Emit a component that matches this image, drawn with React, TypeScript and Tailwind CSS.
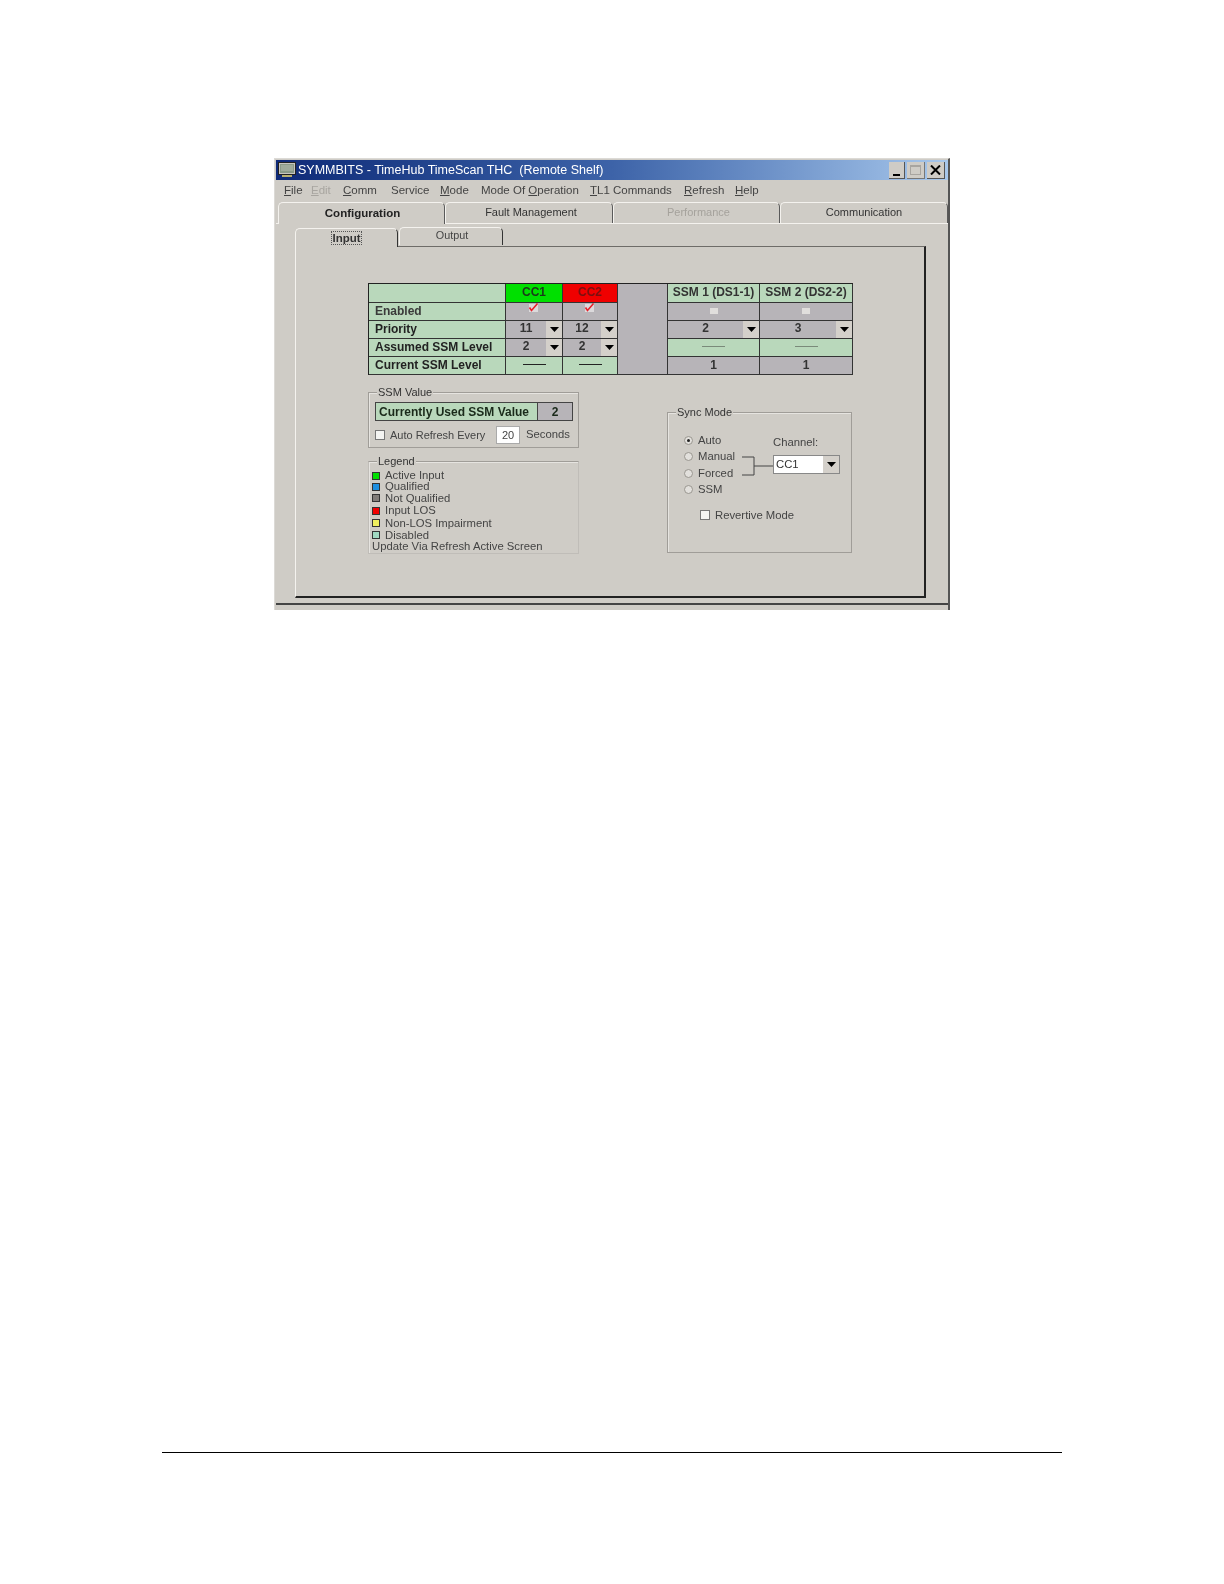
import React from "react";

const menus = [
  { pre: "", key: "F", rest: "ile", w: "w-[27px]", off: false },
  { pre: "", key: "E", rest: "dit", w: "w-[32px]", off: true },
  { pre: "", key: "C", rest: "omm", w: "w-[48px]", off: false },
  { pre: "Service", key: "", rest: "", w: "w-[49px]", off: false },
  { pre: "", key: "M", rest: "ode", w: "w-[41px]", off: false },
  { pre: "Mode Of ", key: "O", rest: "peration", w: "w-[109px]", off: false },
  { pre: "", key: "T", rest: "L1 Commands", w: "w-[94px]", off: false },
  { pre: "", key: "R", rest: "efresh", w: "w-[51px]", off: false },
  { pre: "", key: "H", rest: "elp", w: "w-[40px]", off: false },
];

const legend = [
  { color: "bg-[#00e000]", label: "Active Input", h: "h-[11px]" },
  { color: "bg-[#1e8fe0]", label: "Qualified", h: "h-[11px]" },
  { color: "bg-[#807c78]", label: "Not Qualified", h: "h-[12px]" },
  { color: "bg-[#f00000]", label: "Input LOS", h: "h-[13px]" },
  { color: "bg-[#f0f060]", label: "Non-LOS Impairment", h: "h-[12px]" },
  { color: "bg-[#a0d8c0]", label: "Disabled", h: "h-[12px]" },
];

function Arrow() {
  return (
    <svg width="9" height="5" viewBox="0 0 9 5" className="text-black">
      <polygon points="0,0 9,0 4.5,5" fill="currentColor" />
    </svg>
  );
}

function OuterTab({ label, active, off, w, shift = "" }: { label: string; active?: boolean; off?: boolean; w: string; shift?: string }) {
  return (
    <div
      className={`${w} ${shift} flex items-center justify-center rounded-t-[5px] border-t border-l border-r border-t-[#f4f2ee] border-l-[#f4f2ee] border-r-[#5a5a5a] bg-[#cfccc6] ${
        active ? "relative z-10 -mb-px h-[22px] text-[11.5px] font-bold text-[#222]" : "h-[21px] pb-[2px] text-[11px]"
      } ${off ? "text-[#a5a29c]" : ""}`}
    >
      {label}
    </div>
  );
}

function Head({ children, dark }: { children: React.ReactNode; dark?: boolean }) {
  return (
    <div
      className={`flex items-center border-r border-b border-[#333] bg-[#b9d8bb] pb-[2px] pl-[6px] font-bold ${
        dark ? "text-[#222]" : "text-[#3a3a3a]"
      }`}
    >
      {children}
    </div>
  );
}

function Check() {
  return (
    <div className="flex items-start justify-center border-r border-b border-[#333] bg-[#b7b4b8]">
      <svg width="12" height="10" viewBox="0 0 12 10">
        <rect x="1" y="1" width="9" height="8" fill="#dcdadc" />
        <path d="M1.5 4.5 L3.5 7.5 L9.5 0.5" fill="none" stroke="#e8202a" strokeWidth="1.6" />
      </svg>
    </div>
  );
}

function Box() {
  return (
    <div className="flex items-center justify-center border-r border-b border-[#333] bg-[#b7b4b8]">
      <div className="-mt-[2px] h-[6px] w-[8px] bg-[#e0dedc]" />
    </div>
  );
}

function Drop({ value }: { value: string }) {
  return (
    <div className="flex items-stretch border-r border-b border-[#333] bg-[#b7b4b8]">
      <div className="flex flex-1 items-center justify-center pb-[3px] font-bold text-[#333]">{value}</div>
      <div className="flex w-[16px] items-center justify-center bg-[#d4d0ca]">
        <Arrow />
      </div>
    </div>
  );
}

function Cell({ children, green }: { children?: React.ReactNode; green?: boolean }) {
  return (
    <div
      className={`flex items-center justify-center border-r border-b border-[#333] pb-[2px] font-bold text-[#333] ${
        green ? "bg-[#b9d8bb]" : "bg-[#b7b4b8]"
      }`}
    >
      {children}
    </div>
  );
}

function Dash({ light }: { light?: boolean }) {
  return <div className={`h-px w-[23px] ${light ? "bg-[#7a8a7a]" : "bg-[#222]"}`} />;
}

function Group({ title, titleX, className, children }: { title: string; titleX: string; className: string; children: React.ReactNode }) {
  return (
    <div className={`relative border border-[#a09d98] shadow-[inset_1px_1px_0_#e6e4e0] ${className}`}>
      <span className={`absolute -top-[8px] ${titleX} bg-[#cfccc6] px-[1px] text-[11px] leading-[14px] text-[#333]`}>{title}</span>
      {children}
    </div>
  );
}

function Radio({ label, on }: { label: string; on?: boolean }) {
  return (
    <div className="flex h-[16.5px] items-center">
      <span className="flex h-[9px] w-[9px] items-center justify-center rounded-full border border-[#9a9790] bg-[#e2e0dc]">
        {on && <span className="h-[3px] w-[3px] rounded-full bg-[#222]" />}
      </span>
      <span className="ml-[5px] text-[#444]">{label}</span>
    </div>
  );
}

export default function App() {
  return (
    <div className="h-[1584px] overflow-hidden bg-white pt-[158px] font-['Liberation_Sans',Arial,sans-serif] text-[11.3px] text-[#333]">
      <div className="ml-[274px] flex h-[452px] w-[676px] flex-col border-t border-l border-r-2 border-[#dcdad6] border-r-[#555] bg-[#cfccc6] pt-[1px] pl-[1px] blur-[0.5px]">
        {/* title bar */}
        <div className="flex h-[20px] items-center bg-gradient-to-r from-[#0f2a78] via-[#3d63a8] to-[#a8c8ec] pr-[3px] pl-[2px]">
          <svg width="18" height="16" viewBox="0 0 18 16">
            <rect x="0.5" y="0.5" width="17" height="12" fill="#c8c6c0" stroke="#222" />
            <rect x="2" y="2" width="14" height="9" fill="#8a9a88" />
            <path d="M3 4 H15 M3 6 H15 M3 8 H15" stroke="#b4bcae" />
            <rect x="4" y="13" width="10" height="2" fill="#b8b070" />
          </svg>
          <span className="ml-[2px] text-[12.5px] whitespace-pre text-white">SYMMBITS - TimeHub TimeScan THC  (Remote Shelf)</span>
          <div className="ml-auto flex gap-[2px]">
            <div className="flex h-[17px] w-[16px] items-end justify-center border-r border-b border-[#555] bg-[#cfccc6] pb-[2px]">
              <div className="h-[2px] w-[7px] bg-black" />
            </div>
            <div className="flex h-[17px] w-[18px] items-center justify-center border-r border-b border-[#777] bg-[#cfccc6]">
              <div className="h-[10px] w-[11px] border border-t-2 border-[#a8a5a0]" />
            </div>
            <div className="flex h-[17px] w-[18px] items-center justify-center border-r border-b border-[#555] bg-[#cfccc6]">
              <svg width="11" height="10" viewBox="0 0 11 10">
                <path d="M1 0.5 L10 9.5 M10 0.5 L1 9.5" stroke="#000" strokeWidth="2" />
              </svg>
            </div>
          </div>
        </div>

        {/* menu bar */}
        <div className="flex h-[21px] items-center pt-[1px] pl-[8px] text-[11.5px] whitespace-pre text-[#444]">
          {menus.map((m) => (
            <div key={m.pre + m.key + m.rest} className={`${m.w} shrink-0 ${m.off ? "text-[#a8a5a0]" : ""}`}>
              {m.pre}
              {m.key && <u>{m.key}</u>}
              {m.rest}
            </div>
          ))}
        </div>

        {/* outer tabs */}
        <div className="mt-[1px] flex h-[21px] items-start pl-[2px]">
          <OuterTab label="Configuration" active w="w-[167px]" shift="pl-[2px]" />
          <OuterTab label="Fault Management" w="w-[168px]" shift="pl-[4px]" />
          <OuterTab label="Performance" off w="w-[167px]" shift="pl-[4px]" />
          <OuterTab label="Communication" w="w-[168px]" />
        </div>

        {/* main panel */}
        <div className="flex-1 border-t border-b-2 border-t-[#f4f2ee] border-b-[#444] pt-[3px] pl-[19px]">
          <div className="flex h-[19px] items-end">
            <div className="relative z-10 -mb-px flex h-[19px] w-[103px] items-center justify-center rounded-t-[5px] border-t border-l border-r border-t-[#f4f2ee] border-l-[#f4f2ee] border-r-[#333] bg-[#cfccc6] text-[11.5px] font-bold text-[#333]">
              <span className="border border-dotted border-[#555] leading-[12px]">Input</span>
            </div>
            <div className="mb-[1px] ml-[1px] flex h-[18px] w-[104px] items-center justify-center rounded-t-[5px] border-t border-l border-r border-t-[#f4f2ee] border-l-[#f4f2ee] border-r-[#333] bg-[#cfccc6] pb-[3px] pl-[2px] text-[10.8px] text-[#444]">
              Output
            </div>
          </div>

          <div className="h-[352px] w-[631px] border-t border-r-2 border-b-2 border-l border-t-[#6e6c68] border-r-[#222] border-b-[#222] border-l-[#f4f2ee] pt-[36px] pl-[72px]">
            {/* status table */}
            <div className="grid w-[485px] grid-cols-[137px_57px_55px_50px_92px_93px] grid-rows-[19px_18px_18px_18px_18px] border-t border-l border-[#222] text-[12px]">
              <Head>{""}</Head>
              <div className="flex items-center justify-center border-r border-b border-[#333] bg-[#00e000] pb-[2px] font-bold text-[#1a3a1a]">CC1</div>
              <div className="flex items-center justify-center border-r border-b border-[#333] bg-[#f00000] pb-[2px] font-bold text-[#7a1010]">CC2</div>
              <div className="row-span-5 border-r border-b border-[#333] bg-[#b7b4b8]" />
              <Cell green>SSM 1 (DS1-1)</Cell>
              <Cell green>SSM 2 (DS2-2)</Cell>

              <Head>Enabled</Head>
              <Check />
              <Check />
              <Box />
              <Box />

              <Head dark>Priority</Head>
              <Drop value="11" />
              <Drop value="12" />
              <Drop value="2" />
              <Drop value="3" />

              <Head dark>Assumed SSM Level</Head>
              <Drop value="2" />
              <Drop value="2" />
              <Cell green><Dash light /></Cell>
              <Cell green><Dash light /></Cell>

              <Head dark>Current SSM Level</Head>
              <Cell green><Dash /></Cell>
              <Cell green><Dash /></Cell>
              <Cell>1</Cell>
              <Cell>1</Cell>
            </div>

            <div className="flex items-start">
              <div className="w-[211px] shrink-0">
                <Group title="SSM Value" titleX="left-[8px]" className="mt-[17px] h-[56px] pt-[9px] pl-[6px]">
                  <div className="flex h-[19px] w-[198px] border border-[#444] text-[12px] font-bold text-[#1a2a1a]">
                    <div className="flex w-[162px] items-center border-r border-[#444] bg-[#b9d8bb] pl-[3px]">Currently Used SSM Value</div>
                    <div className="flex flex-1 items-center justify-center bg-[#b7b4b8]">2</div>
                  </div>
                  <div className="mt-[5px] flex items-center text-[#444]">
                    <span className="h-[10px] w-[10px] border border-[#777] bg-[#f4f4f2]" />
                    <span className="ml-[5px] w-[106px] text-[11px]">Auto Refresh Every</span>
                    <span className="flex h-[18px] w-[24px] items-center justify-center border border-[#aaa] bg-white text-[11px]">20</span>
                    <span className="ml-[6px] -mt-[1px] text-[11.3px]">Seconds</span>
                  </div>
                </Group>

                <Group title="Legend" titleX="left-[8px]" className="mt-[13px] h-[93px] border-[#c0bdb8] border-t-[#a09d98] pt-[8px] pl-[3px] leading-[11px]">
                  {legend.map((l) => (
                    <div key={l.label} className={`flex items-center ${l.h}`}>
                      <span className={`h-[8px] w-[8px] border border-[#333] ${l.color}`} />
                      <span className="ml-[5px] text-[#444]">{l.label}</span>
                    </div>
                  ))}
                  <div className="text-[#444]">Update Via Refresh Active Screen</div>
                </Group>
              </div>

              <Group title="Sync Mode" titleX="left-[8px]" className="mt-[37px] ml-[88px] h-[141px] w-[185px] pt-[19px] pl-[16px] text-[#444]">
                <div className="flex">
                  <div className="w-[58px] shrink-0">
                    <Radio label="Auto" on />
                    <Radio label="Manual" />
                    <Radio label="Forced" />
                    <Radio label="SSM" />
                  </div>
                  <svg width="31" height="20" viewBox="0 0 31 20" className="mt-[24px] shrink-0">
                    <path d="M0 1 H12 V19 H0 M12 10 H31" fill="none" stroke="#444" />
                  </svg>
                  <div>
                    <div className="mt-[3px] leading-[14px]">Channel:</div>
                    <div className="mt-[6px] flex h-[19px] w-[67px] border border-[#888] bg-white pl-[2px] text-[#333]">
                      <span className="flex-1 leading-[16px]">CC1</span>
                      <span className="flex w-[16px] items-center justify-center bg-[#d4d0ca]">
                        <Arrow />
                      </span>
                    </div>
                  </div>
                </div>
                <div className="mt-[9px] ml-[16px] flex items-center">
                  <span className="h-[10px] w-[10px] border border-[#777] bg-[#f4f4f2]" />
                  <span className="ml-[5px]">Revertive Mode</span>
                </div>
              </Group>
            </div>
          </div>
        </div>
        <div className="h-[5px]" />
      </div>

      <div className="mt-[842px] ml-[162px] h-px w-[900px] bg-black" />
    </div>
  );
}
